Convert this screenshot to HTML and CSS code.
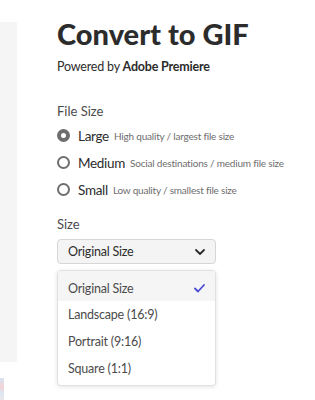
FILE: index.html
```html
<!DOCTYPE html>
<html lang="en">
<head>
    <meta charset="UTF-8">
    <meta name="viewport" content="width=device-width, initial-scale=1.0">
    <title>Convert to GIF</title>
    <link rel="stylesheet" href="styles.css">
</head>
<body>
    <div class="page">
        <div class="side">
            <div class="side-panel"></div>
            <div class="side-thumb"></div>
        </div>

        <div class="main">
            <h1>Convert to GIF</h1>
            <p class="powered">Powered by <strong>Adobe Premiere</strong></p>

            <!-- Taille du fichier -->
            <div class="field file-size">
                <div class="field-label">File Size</div>
                <div class="radio-group">
                    <label class="radio checked">
                        <span class="radio-dot"></span>
                        <span class="radio-title">Large</span>
                        <span class="radio-desc">High quality / largest file size</span>
                    </label>
                    <label class="radio">
                        <span class="radio-dot"></span>
                        <span class="radio-title">Medium</span>
                        <span class="radio-desc">Social destinations / medium file size</span>
                    </label>
                    <label class="radio">
                        <span class="radio-dot"></span>
                        <span class="radio-title">Small</span>
                        <span class="radio-desc">Low quality / smallest file size</span>
                    </label>
                </div>
            </div>

            <!-- Dimensions -->
            <div class="field dimensions">
                <div class="field-label">Size</div>
                <div class="picker">
                    <span>Original Size</span>
                    <svg class="chevron" width="10" height="6" viewBox="0 0 10 6">
                        <path d="M1 1 L5 5 L9 1" fill="none" stroke="#2c2c2c" stroke-width="1.8" stroke-linecap="round" stroke-linejoin="round"/>
                    </svg>
                </div>
                <ul class="menu">
                    <li class="menu-item selected">
                        <span>Original Size</span>
                        <svg class="check" width="11" height="9" viewBox="0 0 11 9">
                            <path d="M1 4.5 L4 7.5 L10 1" fill="none" stroke="#4b4bd6" stroke-width="1.8" stroke-linecap="round" stroke-linejoin="round"/>
                        </svg>
                    </li>
                    <li class="menu-item">Landscape (16:9)</li>
                    <li class="menu-item">Portrait (9:16)</li>
                    <li class="menu-item">Square (1:1)</li>
                </ul>
            </div>
        </div>
    </div>
</body>
</html>
```

FILE: styles.css
```css
body {
    font-family: 'Lato', 'Noto Sans', sans-serif;
    background-color: white;
    margin: 0;
    padding: 0;
    color: #2c2c2c;
}

.page {
    display: flex;
}

.side {
    width: 17px;
    flex-shrink: 0;
}

.side-panel {
    margin-top: 22px;
    height: 340px;
    background-color: #f5f5f5;
}

.side-thumb {
    margin-top: 16px;
    width: 4px;
    height: 22px;
    background: linear-gradient(#d8e4f4, #f2d4d8 40%, #dde6f2 70%, #e8e8e8);
}

.main {
    padding-left: 40px;
    padding-top: 16px;
}

h1 {
    margin: 0;
    font-size: 29px;
    font-weight: 900;
    line-height: 36px;
    color: #2c2c2c;
}

.powered {
    margin: 6px 0 0;
    font-size: 12.5px;
    line-height: 18px;
    letter-spacing: -0.2px;
    color: #2c2c2c;
}

.powered strong {
    font-weight: 700;
}

.field-label {
    font-size: 13px;
    line-height: 18px;
    color: #4b4b4b;
}

.file-size {
    margin-top: 26px;
}

.file-size .field-label {
    margin-bottom: 6px;
}

.dimensions {
    margin-top: 16px;
}

.dimensions .field-label {
    margin-bottom: 6px;
}

.radio-group {
    display: flex;
    flex-direction: column;
    gap: 8px;
}

.radio {
    display: flex;
    align-items: center;
    height: 19px;
    cursor: pointer;
}

.radio-dot {
    width: 13px;
    height: 13px;
    border: 2px solid #6e6e6e;
    border-radius: 50%;
    box-sizing: border-box;
    margin-right: 8px;
}

.radio.checked .radio-dot {
    border: 4px solid #6e6e6e;
}

.radio-title {
    font-size: 13.5px;
    letter-spacing: -0.3px;
    color: #2c2c2c;
    margin-right: 5px;
}

.radio-desc {
    font-size: 10px;
    letter-spacing: -0.2px;
    color: #6e6e6e;
}

.picker {
    width: 159px;
    height: 25px;
    box-sizing: border-box;
    padding: 0 10px;
    display: flex;
    align-items: center;
    justify-content: space-between;
    background-color: #f4f4f4;
    border: 1px solid #d6d6d6;
    border-radius: 4px;
    font-size: 12.5px;
    letter-spacing: -0.2px;
}

.menu {
    list-style: none;
    margin: 6px 0 0;
    padding: 0 0 3px;
    width: 159px;
    box-sizing: border-box;
    background-color: white;
    border: 1px solid #e1e1e1;
    border-radius: 4px;
    box-shadow: 0 1px 4px rgba(0, 0, 0, 0.12);
    overflow: hidden;
}

.menu-item {
    height: 27px;
    padding: 0 10px;
    display: flex;
    align-items: center;
    justify-content: space-between;
    font-size: 12.5px;
    letter-spacing: -0.2px;
    color: #4b4b4b;
}

.menu-item.selected {
    background-color: #f5f5f5;
    padding-top: 4px;
    box-sizing: border-box;
    height: 30px;
}
```
